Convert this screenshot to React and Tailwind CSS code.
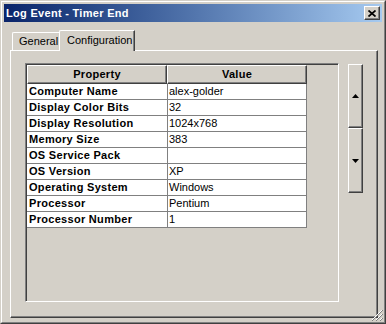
const ROWS = [
  ['Computer Name', 'alex-golder'],
  ['Display Color Bits', '32'],
  ['Display Resolution', '1024x768'],
  ['Memory Size', '383'],
  ['OS Service Pack', ''],
  ['OS Version', 'XP'],
  ['Operating System', 'Windows'],
  ['Processor', 'Pentium'],
  ['Processor Number', '1'],
]

function ArrowButton({ dir, h }) {
  return (
    <div
      className={`w-[15px] ${h} flex items-center justify-center border border-t-white border-l-white border-r-[#404040] border-b-[#404040] shadow-[inset_-1px_-1px_#808080]`}
    >
      <svg width="7" height="4" viewBox="0 0 7 4">
        {dir === 'up' ? <polygon points="0,4 7,4 3.5,0" fill="#000" /> : <polygon points="0,0 7,0 3.5,4" fill="#000" />}
      </svg>
    </div>
  )
}

export default function App() {
  return (
    <div className="relative w-[386px] h-[324px] overflow-hidden bg-[#d4d0c8] text-[11px] text-black font-['Liberation_Sans',Arial,sans-serif] border border-t-[#d4d0c8] border-l-[#d4d0c8] border-r-[#404040] border-b-[#404040]">
      <div className="h-full flex flex-col p-[2px] border border-t-white border-l-white border-r-[#808080] border-b-[#808080]">
        {/* Title bar */}
        <div className="h-[18px] flex items-center justify-between pl-[2px] pr-[2px] bg-linear-to-r from-[#0a246a] to-[#a6caf0]">
          <span className="text-white font-bold tracking-[0.3px] leading-none">Log Event - Timer End</span>
          <div className="w-[16px] h-[14px] flex items-center justify-center bg-[#d4d0c8] border border-t-white border-l-white border-r-[#404040] border-b-[#404040] shadow-[inset_-1px_-1px_#808080]">
            <svg width="8" height="7" viewBox="0 0 8 7">
              <path d="M0.5 0.5 L7.5 6.5 M7.5 0.5 L0.5 6.5" stroke="#000" strokeWidth="1.7" />
            </svg>
          </div>
        </div>

        {/* Body */}
        <div className="flex-1 flex flex-col pl-[6px] pr-[4px] pt-[8px] pb-[2px]">
          {/* Tabs */}
          <div className="h-[20px] flex items-end pl-[2px]">
            <div className="h-[18px] w-[48px] flex items-center pl-[6px] border-t border-l border-r border-t-white border-l-white border-r-[#404040] rounded-tl-[2px]">
              General
            </div>
            <div className="relative z-10 -mb-px h-[21px] w-[76px] -ml-px flex items-center pl-[7px] pb-[1px] bg-[#d4d0c8] border-t border-l border-r border-t-white border-l-white border-r-[#404040] shadow-[inset_-1px_0_#808080] rounded-tl-[2px]">
              Configuration
            </div>
          </div>

          {/* Panel */}
          <div className="flex-1 flex items-start pl-[14px] pt-[12px] border border-t-white border-l-white border-r-[#404040] border-b-[#404040] shadow-[inset_-1px_-1px_#808080]">
            {/* List frame */}
            <div className="w-[314px] h-[239px] pl-px pt-px bg-[#d4d0c8] border border-t-[#808080] border-l-[#808080] border-r-white border-b-white shadow-[inset_1px_1px_#404040]">
              <div className="flex h-[19px] font-bold">
                <div className="w-[140px] flex items-center justify-center tracking-[0.3px] border border-t-white border-l-white border-r-[#404040] border-b-[#404040] shadow-[inset_-1px_-1px_#808080]">
                  Property
                </div>
                <div className="w-[140px] flex items-center justify-center tracking-[0.3px] border border-t-white border-l-white border-r-[#404040] border-b-[#404040] shadow-[inset_-1px_-1px_#808080]">
                  Value
                </div>
              </div>
              {ROWS.map(([k, v]) => (
                <div key={k} className="flex h-[16px]">
                  <div className="w-[141px] flex items-center pl-[2px] bg-white font-bold tracking-[0.3px] border-r border-b border-[#808080]">
                    {k}
                  </div>
                  <div className="w-[139px] flex items-center pl-px bg-white border-r border-b border-[#808080]">
                    {v}
                  </div>
                </div>
              ))}
            </div>

            {/* Move buttons */}
            <div className="ml-[9px] mt-px flex flex-col">
              <ArrowButton dir="up" h="h-[64px]" />
              <ArrowButton dir="down" h="h-[65px]" />
            </div>
          </div>
        </div>
      </div>

      {/* Resize grip */}
      <svg className="absolute right-[2px] bottom-[2px]" width="12" height="12" viewBox="0 0 12 12">
        <path d="M11 1 L1 11 M11 5 L5 11 M11 9 L9 11" stroke="#fff" strokeWidth="1" />
        <path d="M12 1 L1 12 M12 5 L5 12 M12 9 L9 12" stroke="#808080" strokeWidth="1" />
      </svg>
    </div>
  )
}
